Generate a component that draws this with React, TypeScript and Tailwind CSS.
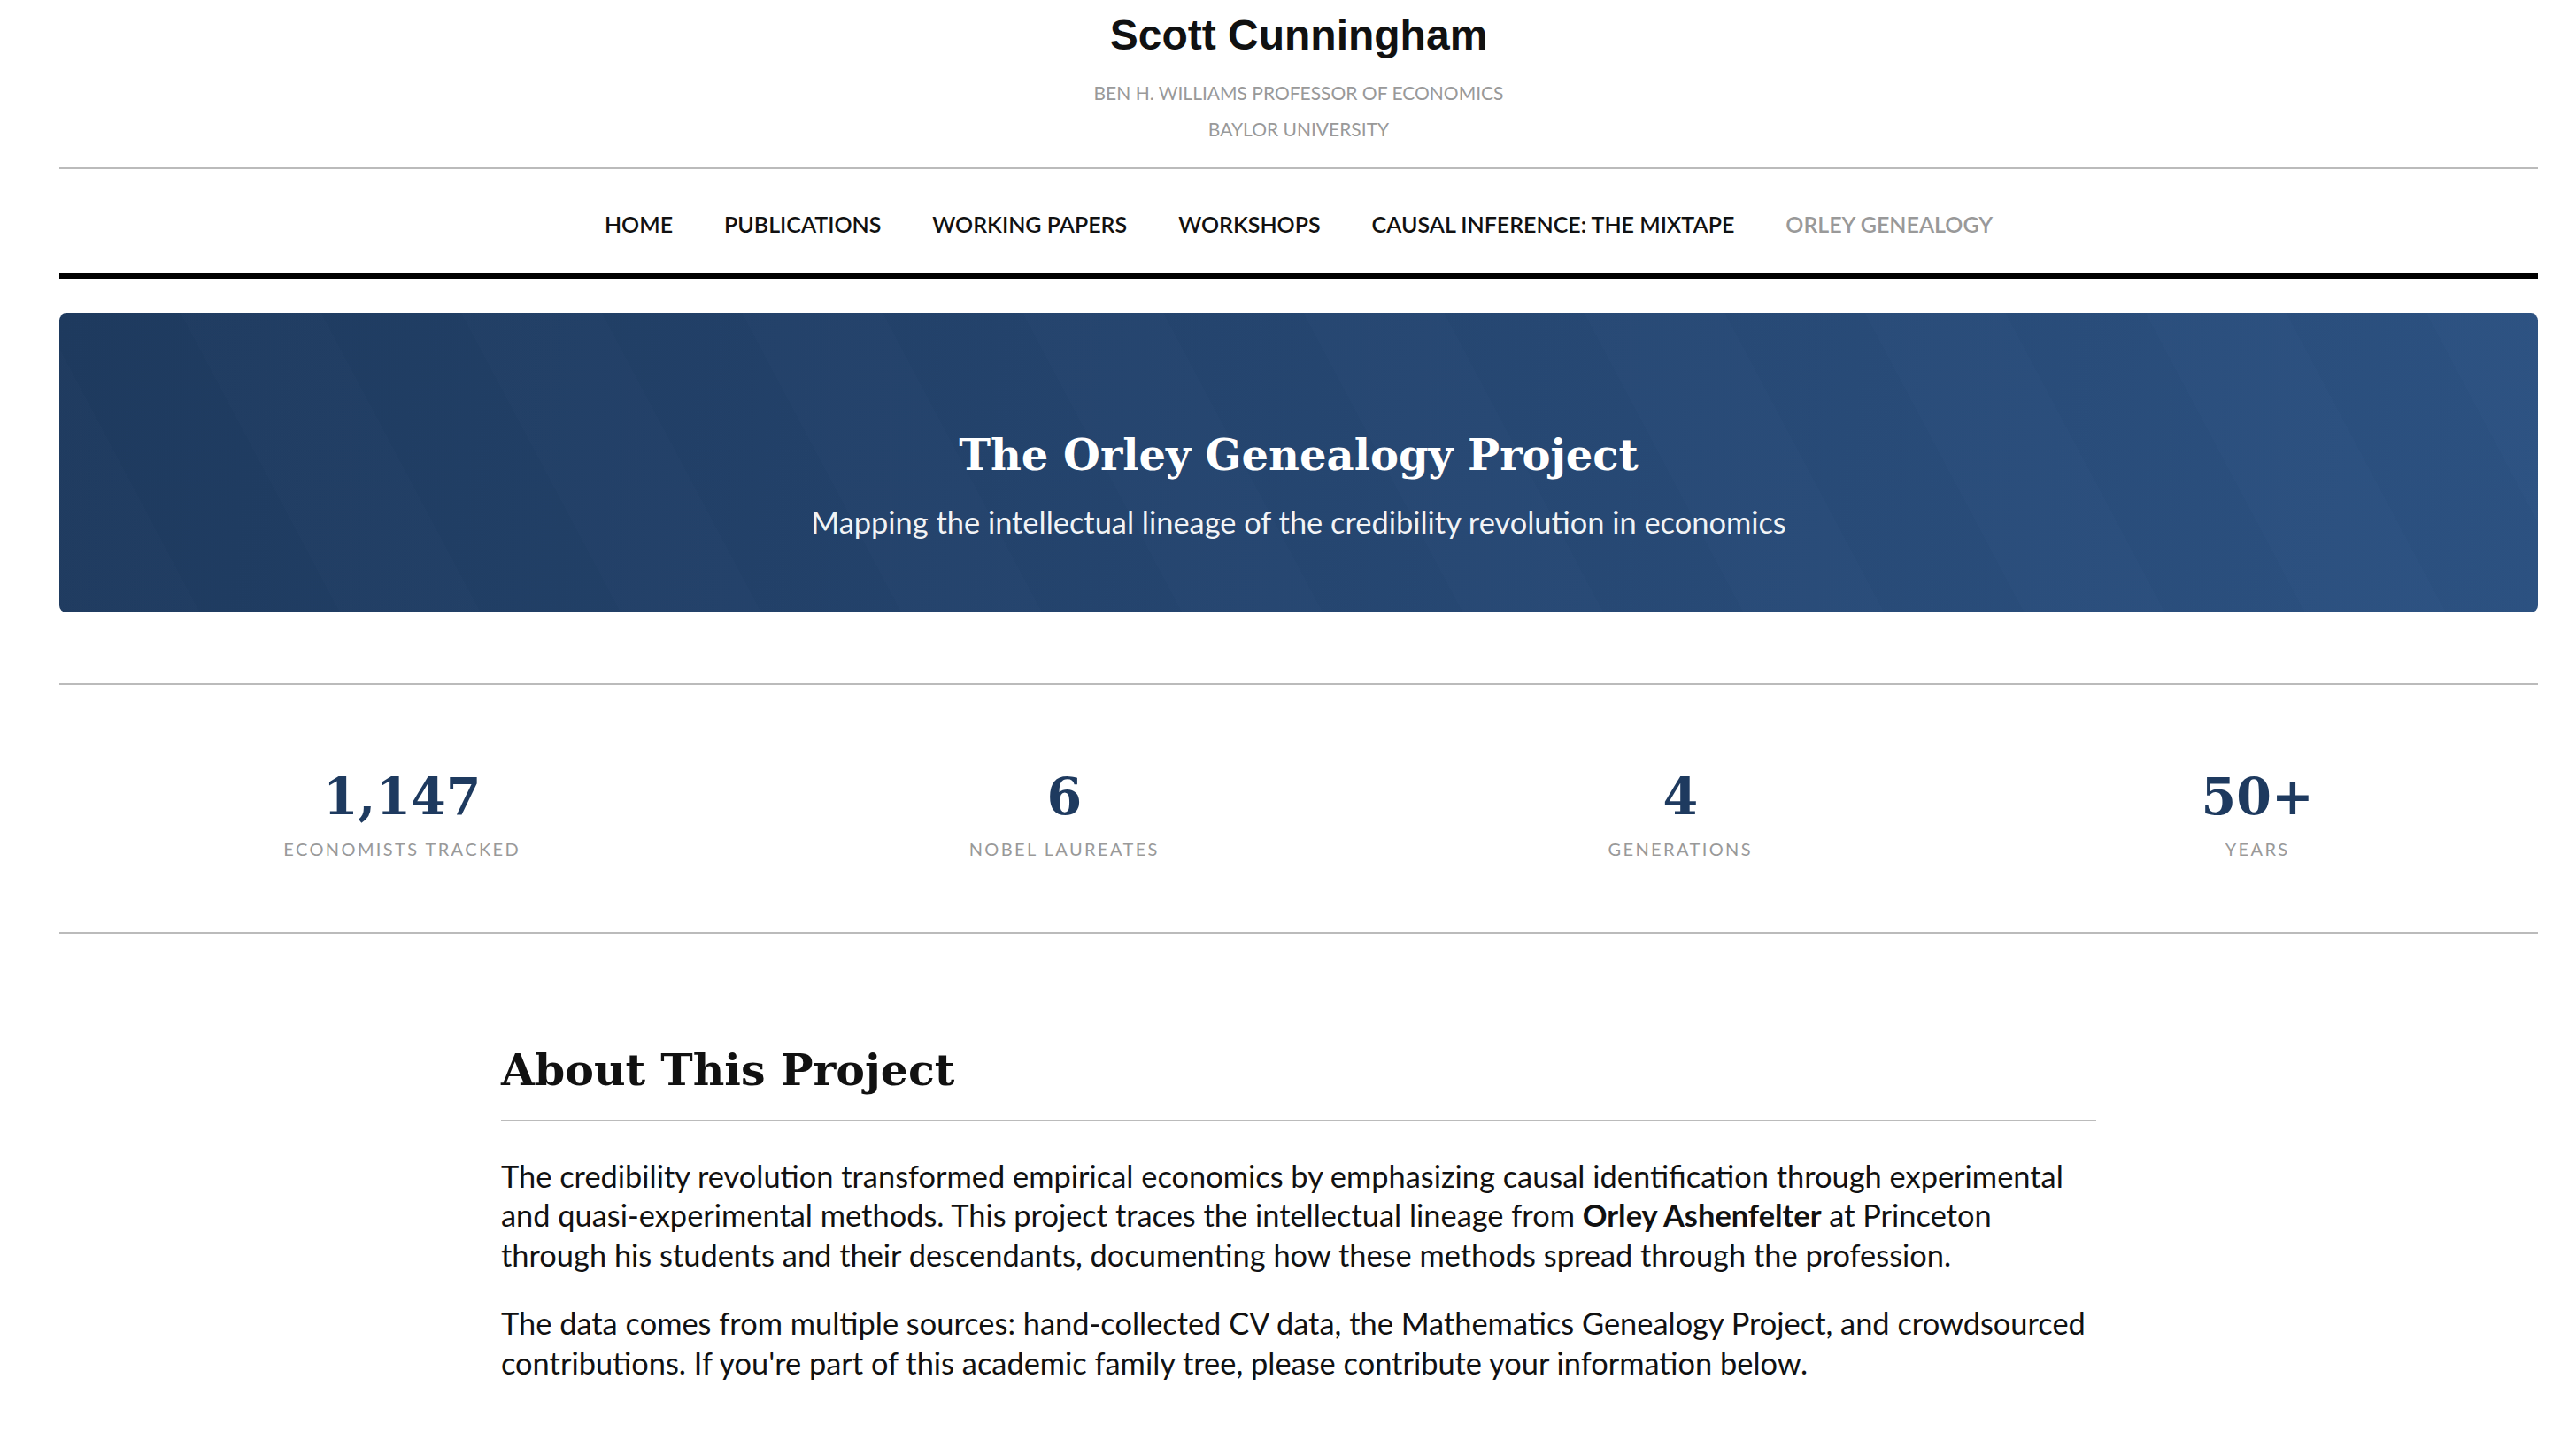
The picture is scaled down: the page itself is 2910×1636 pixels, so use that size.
const NAV = [
  { label: "Home" },
  { label: "Publications" },
  { label: "Working Papers" },
  { label: "Workshops" },
  { label: "Causal Inference: The Mixtape" },
  { label: "Orley Genealogy", active: true },
];

const STATS = [
  { value: "1,147", label: "Economists Tracked" },
  { value: "6", label: "Nobel Laureates" },
  { value: "4", label: "Generations" },
  { value: "50+", label: "Years" },
];

const serif = "font-['DejaVu_Serif',Georgia,serif]";

export default function App() {
  return (
    <div className="min-h-screen bg-white font-['Lato','Noto_Sans',sans-serif] text-[#111]">
      <div className="ml-[67px] mr-[43px]">
        {/* site header */}
        <header className="pt-[16px] pb-[23px] text-center">
          <h1 className="font-['Liberation_Sans',Arial,sans-serif] text-[48px] font-bold leading-none text-[#111]">
            Scott Cunningham
          </h1>
          <div className="mt-[20px] text-[21px] uppercase leading-[41px] text-[#999]">
            <p>Ben H. Williams Professor of Economics</p>
            <p>Baylor University</p>
          </div>
        </header>

        <nav className="border-t-2 border-[#bbb] pt-[47px] pb-[41px]">
          <ul className="flex justify-center gap-[58px] text-[25px] font-semibold uppercase leading-[30px]">
            {NAV.map((item) => (
              <li key={item.label} className={item.active ? "text-[#999]" : "text-[#111]"}>
                {item.label}
              </li>
            ))}
          </ul>
        </nav>
        <div className="h-[6px] bg-black" />

        {/* hero */}
        <section className="mt-[39px] h-[338px] rounded-[8px] bg-[repeating-linear-gradient(62deg,rgba(255,255,255,0.006)_0px,rgba(255,255,255,0.006)_140px,rgba(0,0,0,0.006)_140px,rgba(0,0,0,0.006)_280px),linear-gradient(100deg,#1e3a5f_0%,#2c5282_100%)] pt-[132px] text-center text-white">
          <h2 className={`${serif} text-[48px] font-bold leading-[1.2]`}>
            The Orley Genealogy Project
          </h2>
          <p className="mt-[25px] text-[34.4px] leading-[42px] text-white/95">
            Mapping the intellectual lineage of the credibility revolution in economics
          </p>
        </section>

        {/* stats */}
        <section className="mt-[80px] flex justify-around border-y-2 border-[#bbb] pt-[97px] pb-[82px]">
          {STATS.map((s) => (
            <div key={s.label} className="flex flex-col items-center">
              <div className={`${serif} text-[57px] font-bold leading-none text-[#1e3a5f]`}>
                {s.value}
              </div>
              <div className="mt-[19px] text-[20px] uppercase leading-[24px] tracking-[0.12em] text-[#999]">
                {s.label}
              </div>
            </div>
          ))}
        </section>

        {/* about */}
        <section className="mx-auto w-[1802px] pt-[125px] pb-[80px]">
          <h2
            className={`${serif} border-b-2 border-[#bbb] pb-[26px] text-[49px] font-bold leading-[1.2] text-[#111]`}
          >
            About This Project
          </h2>
          <div className="mt-[40px] text-[34.4px] leading-[44.5px] text-[#111]">
            <p>
              The credibility revolution transformed empirical economics by emphasizing causal
              identification through experimental and quasi-experimental methods. This project
              traces the intellectual lineage from <strong className="font-bold">Orley Ashenfelter</strong> at
              Princeton through his students and their descendants, documenting how these methods
              spread through the profession.
            </p>
            <p className="mt-[33px]">
              The data comes from multiple sources: hand-collected CV data, the Mathematics
              Genealogy Project, and crowdsourced contributions. If you're part of this academic
              family tree, please contribute your information below.
            </p>
          </div>
        </section>
      </div>
    </div>
  );
}
